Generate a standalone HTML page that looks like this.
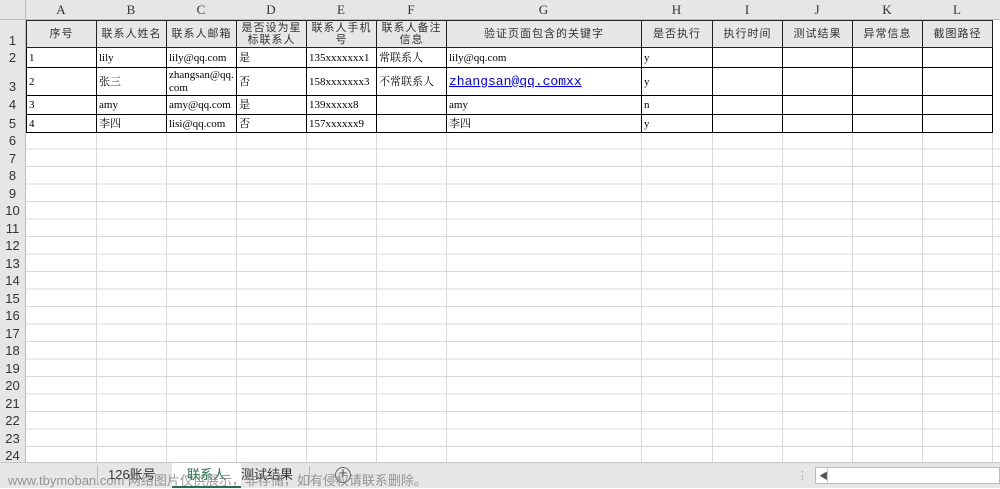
<!DOCTYPE html>
<html><head><meta charset="utf-8"><style>
*{margin:0;padding:0;box-sizing:border-box}
body{width:1000px;height:488px;overflow:hidden;background:#fff;position:relative;font-family:"Liberation Serif","Noto Serif CJK SC",serif;font-size:11px;color:#000}
.v{position:absolute;top:0;width:1px;height:462px;background:#d9d9d9}
.grid{position:absolute;left:0;top:132px;width:1000px;height:330px;background:repeating-linear-gradient(to bottom,transparent 0,transparent 16.5px,#d9d9d9 16.5px,#d9d9d9 17.5px)}
.rh{position:absolute;left:0;top:0;width:26px;height:462px;background:#e6e6e6;border-right:1px solid #bdbdbd}
.rn{position:absolute;left:0;width:25px;text-align:center;font-family:"Liberation Sans",sans-serif;font-size:13px;color:#333}
.ch{position:absolute;top:0;left:0;width:1000px;height:20px;background:#e6e6e6;border-bottom:1px solid #bdbdbd}
.cl{position:absolute;top:2px;text-align:center;font-family:"Liberation Serif",serif;font-size:13px;color:#333}
table{position:absolute;left:26px;top:20px;border-collapse:collapse;table-layout:fixed}
td{border:1px solid #000;padding:0 2px;overflow:hidden;white-space:nowrap;vertical-align:middle;font-size:11px;line-height:12px}
tr.h td{background:#e7e7e7;text-align:center;color:#333;white-space:normal;font-family:"Liberation Sans","Noto Sans CJK SC",sans-serif;letter-spacing:1px;border-color:#222;line-height:12px}
.tabs{position:absolute;left:0;top:462px;width:1000px;height:26px;background:#e6e6e6;border-top:1px solid #c6c6c6;font-family:"Liberation Sans","Noto Sans CJK SC",sans-serif}
.tab{position:absolute;top:0;height:25px;line-height:24px;font-size:13px;color:#333}
</style></head><body>
<div class="grid"></div>
<div class="v" style="left:96px"></div><div class="v" style="left:166px"></div><div class="v" style="left:236px"></div><div class="v" style="left:306px"></div><div class="v" style="left:376px"></div><div class="v" style="left:446px"></div><div class="v" style="left:641px"></div><div class="v" style="left:712px"></div><div class="v" style="left:782px"></div><div class="v" style="left:852px"></div><div class="v" style="left:922px"></div><div class="v" style="left:992px"></div>
<div class="ch">
<div class="cl" style="left:26px;width:70px">A</div><div class="cl" style="left:96px;width:70px">B</div><div class="cl" style="left:166px;width:70px">C</div><div class="cl" style="left:236px;width:70px">D</div><div class="cl" style="left:306px;width:70px">E</div><div class="cl" style="left:376px;width:70px">F</div><div class="cl" style="left:446px;width:195px">G</div><div class="cl" style="left:641px;width:71px">H</div><div class="cl" style="left:712px;width:70px">I</div><div class="cl" style="left:782px;width:70px">J</div><div class="cl" style="left:852px;width:70px">K</div><div class="cl" style="left:922px;width:70px">L</div>
</div>
<div class="rh">
<div class="rn" style="top:33px">1</div><div class="rn" style="top:50px">2</div><div class="rn" style="top:79px">3</div><div class="rn" style="top:97px">4</div><div class="rn" style="top:116px">5</div>
<div class="rn" style="top:133px">6</div><div class="rn" style="top:150.5px">7</div><div class="rn" style="top:168px">8</div><div class="rn" style="top:185.5px">9</div><div class="rn" style="top:203px">10</div><div class="rn" style="top:220.5px">11</div><div class="rn" style="top:238px">12</div><div class="rn" style="top:255.5px">13</div><div class="rn" style="top:273px">14</div><div class="rn" style="top:290.5px">15</div><div class="rn" style="top:308px">16</div><div class="rn" style="top:325.5px">17</div><div class="rn" style="top:343px">18</div><div class="rn" style="top:360.5px">19</div><div class="rn" style="top:378px">20</div><div class="rn" style="top:395.5px">21</div><div class="rn" style="top:413px">22</div><div class="rn" style="top:430.5px">23</div><div class="rn" style="top:448px">24</div>
</div>
<div style="position:absolute;left:0;top:0;width:26px;height:20px;background:#e6e6e6;border-right:1px solid #bdbdbd;border-bottom:1px solid #bdbdbd"></div>
<table>
<colgroup><col style="width:70px"><col style="width:70px"><col style="width:70px"><col style="width:70px"><col style="width:70px"><col style="width:70px"><col style="width:195px"><col style="width:71px"><col style="width:70px"><col style="width:70px"><col style="width:70px"><col style="width:70px"></colgroup>
<tr class="h" style="height:27px"><td>序号</td><td>联系人姓名</td><td>联系人邮箱</td><td>是否设为星标联系人</td><td>联系人手机号</td><td>联系人备注信息</td><td>验证页面包含的关键字</td><td>是否执行</td><td>执行时间</td><td>测试结果</td><td>异常信息</td><td>截图路径</td></tr>
<tr style="height:20px"><td>1</td><td>lily</td><td>lily@qq.com</td><td>是</td><td>135xxxxxxx1</td><td>常联系人</td><td>lily@qq.com</td><td>y</td><td></td><td></td><td></td><td></td></tr>
<tr style="height:28px"><td>2</td><td>张三</td><td style="white-space:normal;word-break:break-all;line-height:13px">zhangsan@qq.<br>com</td><td>否</td><td>158xxxxxxx3</td><td>不常联系人</td><td style="font-family:'Liberation Mono',monospace;font-size:13px;color:#0000ee;text-decoration:underline">zhangsan@qq.comxx</td><td>y</td><td></td><td></td><td></td><td></td></tr>
<tr style="height:19px"><td>3</td><td>amy</td><td>amy@qq.com</td><td>是</td><td>139xxxxx8</td><td></td><td>amy</td><td>n</td><td></td><td></td><td></td><td></td></tr>
<tr style="height:18px"><td>4</td><td>李四</td><td>lisi@qq.com</td><td>否</td><td>157xxxxxx9</td><td></td><td>李四</td><td>y</td><td></td><td></td><td></td><td></td></tr>
</table>
<div class="tabs">
<div style="position:absolute;left:97px;top:2px;width:1px;height:20px;background:#bbb"></div>
<div class="tab" style="left:108px">126账号</div>
<div class="tab" style="left:172px;width:69px;background:#fff;text-align:center;color:#217346;border-bottom:2px solid #217346">联系人</div>
<div class="tab" style="left:241px">测试结果</div>
<div style="position:absolute;left:309px;top:3px;width:1px;height:18px;background:#bbb"></div>
<div style="position:absolute;left:335px;top:4px;width:16px;height:16px;border:1.5px solid #666;border-radius:50%;text-align:center;line-height:12px;font-size:15px;color:#555">+</div>
<div style="position:absolute;left:797px;top:6px;color:#aaa;font-size:11px">⋮</div>
<div style="position:absolute;left:815px;top:4px;width:185px;height:17px;background:#fff;border:1px solid #bbb"><span style="position:absolute;left:3px;top:1px;font-size:9px;color:#555">◀</span><div style="position:absolute;left:11px;top:0;width:1px;height:15px;background:#ccc"></div></div>
<div style="position:absolute;left:8px;top:7px;font-size:13px;color:rgba(120,120,120,0.75);white-space:nowrap">www.tbymoban.com 网络图片仅供展示，非存储，如有侵权请联系删除。</div>
</div>
</body></html>
